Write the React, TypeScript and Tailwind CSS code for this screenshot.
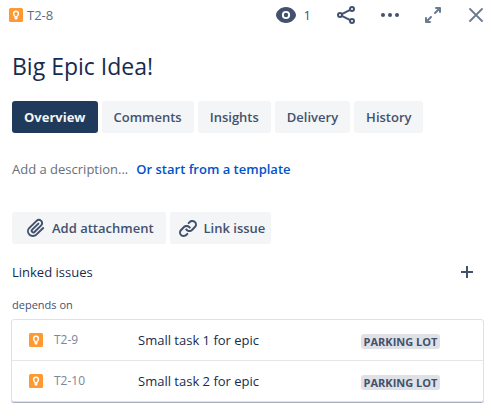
import { clsx } from "clsx";
import { useState } from "react";
import type { ReactNode } from "react";

type LinkedIssue = {
  key: string;
  summary: string;
  status: string;
};

const tabs = ["Overview", "Comments", "Insights", "Delivery", "History"];

const linkedIssues: LinkedIssue[] = [
  { key: "T2-9", summary: "Small task 1 for epic", status: "Parking lot" },
  { key: "T2-10", summary: "Small task 2 for epic", status: "Parking lot" },
];

function IdeaIcon() {
  return (
    <svg viewBox="0 0 14 14" className="size-3.5 shrink-0" aria-hidden="true">
      <rect width="14" height="14" rx="1.5" fill="#ff9a33" />
      <path
        d="M7 2.6a3.1 3.1 0 0 0-3.1 3.1c0 1.2.6 1.9 1.2 2.6.3.4.4.7.4 1.1h3c0-.4.1-.7.4-1.1.6-.7 1.2-1.4 1.2-2.6A3.1 3.1 0 0 0 7 2.6z"
        fill="#fff"
      />
      <path
        d="M7 3.9a1.7 1.7 0 0 0-1.7 1.8c0 .9.9 1.4 1 2.3h1.4c.1-.9 1-1.4 1-2.3A1.7 1.7 0 0 0 7 3.9z"
        fill="#ff9a33"
      />
      <path d="M5.6 9.2h2.8v1.5c0 .5-.4.8-.8.8H6.4c-.5 0-.8-.3-.8-.8z" fill="#fff" />
    </svg>
  );
}

function EyeIcon() {
  return (
    <svg viewBox="0 0 20 16" className="h-4 w-5" aria-hidden="true">
      <path
        fillRule="evenodd"
        fill="currentColor"
        d="M10 0C4.5 0 0 4.5 0 8s4.5 8 10 8 10-4.5 10-8-4.5-8-10-8zm0 3.9a4.1 4.1 0 1 1 0 8.2 4.1 4.1 0 0 1 0-8.2z"
      />
      <circle cx="10" cy="8" r="2.2" fill="currentColor" />
    </svg>
  );
}

function ShareIcon() {
  return (
    <svg
      viewBox="0 0 18 18"
      className="size-4.5"
      fill="none"
      stroke="currentColor"
      strokeWidth="2"
      aria-hidden="true"
    >
      <circle cx="3" cy="9" r="2" />
      <circle cx="15" cy="3" r="2" />
      <circle cx="15" cy="15" r="2" />
      <path d="M4.8 8.1l8.4-4.2M4.8 9.9l8.4 4.2" />
    </svg>
  );
}

function MoreIcon() {
  return (
    <svg viewBox="0 0 18 18" className="size-4.5" fill="currentColor" aria-hidden="true">
      <circle cx="2" cy="9" r="2" />
      <circle cx="9" cy="9" r="2" />
      <circle cx="16" cy="9" r="2" />
    </svg>
  );
}

function ExpandIcon() {
  return (
    <svg
      viewBox="0 0 16 16"
      className="size-4"
      fill="none"
      stroke="currentColor"
      strokeWidth="2"
      strokeLinecap="round"
      strokeLinejoin="round"
      aria-hidden="true"
    >
      <path d="M11 1h4v4M14.500 1.500L10 6M5 15H1v-4M1.500 14.500L6 10" />
    </svg>
  );
}

function CloseIcon() {
  return (
    <svg
      viewBox="0 0 14 14"
      className="size-3.5"
      fill="none"
      stroke="currentColor"
      strokeWidth="1.8"
      strokeLinecap="round"
      aria-hidden="true"
    >
      <path d="M1 1l12 12M13 1L1 13" />
    </svg>
  );
}

function AttachmentIcon() {
  return (
    <svg viewBox="0 0 24 24" className="size-6" fill="currentColor" aria-hidden="true">
      <path d="M11.643 17.965c-1.53 1.495-4.016 1.496-5.542.004a3.773 3.773 0 0 1 .002-5.412l7.147-6.985a2.316 2.316 0 0 1 3.233-.003c.893.873.895 2.282.004 3.153l-6.703 6.55a.653.653 0 0 1-.914-.008.62.62 0 0 1 0-.902l6.229-6.087a.941.941 0 0 0 0-1.353.995.995 0 0 0-1.384 0l-6.23 6.087a2.502 2.502 0 0 0 0 3.607 2.643 2.643 0 0 0 3.683.009l6.703-6.55a4.074 4.074 0 0 0-.003-5.859 4.306 4.306 0 0 0-6.002.003l-7.148 6.985a5.655 5.655 0 0 0-.001 8.118c2.29 2.237 6.014 2.238 8.308-.004l6.832-6.675a.936.936 0 0 0 0-1.352.99.99 0 0 0-1.384 0l-6.832 6.675z" />
    </svg>
  );
}

function LinkIcon() {
  return (
    <svg viewBox="0 0 24 24" className="size-6" fill="currentColor" aria-hidden="true">
      <path d="M12.856 5.457l-.937.92a1.002 1.002 0 0 0 0 1.437 1.047 1.047 0 0 0 1.463 0l.984-.966c.967-.95 2.542-1.135 3.602-.288a2.54 2.54 0 0 1 .203 3.81l-2.903 2.852a2.646 2.646 0 0 1-3.696 0l-1.11-1.09L9 13.57l1.108 1.089c1.822 1.788 4.802 1.788 6.622 0l2.905-2.852a4.558 4.558 0 0 0-.357-6.82c-1.893-1.517-4.695-1.226-6.422.47" />
      <path d="M11.144 19.543l.937-.92a1.002 1.002 0 0 0 0-1.437 1.047 1.047 0 0 0-1.462 0l-.985.966c-.967.95-2.542 1.135-3.602.288a2.54 2.54 0 0 1-.203-3.81l2.903-2.852a2.646 2.646 0 0 1 3.696 0l1.11 1.09L15 11.43l-1.108-1.089c-1.822-1.788-4.802-1.788-6.622 0l-2.905 2.852a4.558 4.558 0 0 0 .357 6.82c1.893 1.517 4.695 1.226 6.422-.47" />
    </svg>
  );
}

function PlusIcon() {
  return (
    <svg
      viewBox="0 0 12 12"
      className="size-3"
      fill="none"
      stroke="currentColor"
      strokeWidth="2"
      aria-hidden="true"
    >
      <path d="M6 0v12M0 6h12" />
    </svg>
  );
}

function ActionButton({
  icon,
  className,
  children,
}: {
  icon: ReactNode;
  className?: string;
  children: ReactNode;
}) {
  return (
    <button
      type="button"
      className={clsx(
        "flex h-8 items-center gap-1 rounded-[3px] bg-[#f4f5f7] font-semibold text-[#42526e] hover:bg-[#ebecf0]",
        className,
      )}
    >
      {icon}
      {children}
    </button>
  );
}

export default function App() {
  const [activeTab, setActiveTab] = useState("Overview");

  return (
    <main className="bg-white pb-3 font-['Open_Sans','Noto_Sans',sans-serif] text-[13px] leading-5 text-[#172b4d]">
      <header className="flex h-[30px] items-center justify-between pr-2 pl-[9px]">
        <a href="#T2-8" className="flex items-center gap-1 text-[#5e6c84]">
          <IdeaIcon />
          T2-8
        </a>
        <div className="flex items-center gap-7 text-[#42526e]">
          <div className="flex items-center gap-[26px]">
            <button type="button" aria-label="Watchers" className="flex items-center gap-2">
              <EyeIcon />
              1
            </button>
            <button type="button" aria-label="Share">
              <ShareIcon />
            </button>
            <button type="button" aria-label="More actions">
              <MoreIcon />
            </button>
            <button type="button" aria-label="Expand" className="text-[#6b7a90]">
              <ExpandIcon />
            </button>
          </div>
          <button type="button" aria-label="Close" className="text-[#6b7a90]">
            <CloseIcon />
          </button>
        </div>
      </header>

      <h1 className="mt-5 px-3 text-[23px] leading-8">Big Epic Idea!</h1>

      <div role="tablist" className="mt-[19px] flex gap-1 px-3">
        {tabs.map((tab) => (
          <button
            key={tab}
            type="button"
            role="tab"
            aria-selected={tab === activeTab}
            onClick={() => setActiveTab(tab)}
            className={clsx(
              "h-8 rounded-[3px] px-3",
              tab === activeTab
                ? "bg-[#1f3a5a] font-bold text-[#f4f5f7]"
                : "bg-[#f4f5f7] font-semibold text-[#42526e] hover:bg-[#ebecf0]",
            )}
          >
            {tab}
          </button>
        ))}
      </div>

      <p className="mt-[26px] flex gap-2 px-3">
        <span className="text-[#6b6e76]">Add a description...</span>
        <a href="#templates" className="font-semibold text-[#0052cc] hover:underline">
          Or start from a template
        </a>
      </p>

      <div className="mt-[33px] flex gap-1 px-3">
        <ActionButton icon={<AttachmentIcon />} className="px-3">
          Add attachment
        </ActionButton>
        <ActionButton icon={<LinkIcon />} className="px-1.5">
          Link issue
        </ActionButton>
      </div>

      <section>
        <div className="mt-[18px] flex items-center justify-between pr-[18px] pl-3">
          <h2>Linked issues</h2>
          <button type="button" aria-label="Link an issue" className="text-[#42526e]">
            <PlusIcon />
          </button>
        </div>
        <h3 className="mt-[13px] px-3 text-[11px] text-[#42526e]">depends on</h3>
        <ul className="mt-1 mr-[7px] ml-[11px] rounded-[3px] border border-[#dfe1e6] shadow-[0_1px_0_#a5b1c2]">
          {linkedIssues.map((issue) => (
            <li
              key={issue.key}
              className="grid grid-cols-[109px_1fr_79px] items-center border-b border-[#e4e6ea] py-2.5 pr-[43px] pl-[17px] last:border-b-0"
            >
              <a href={`#${issue.key}`} className="flex items-center gap-[11px] text-xs text-[#7a869a]">
                <IdeaIcon />
                {issue.key}
              </a>
              <span className="truncate">{issue.summary}</span>
              <span className="mt-0.5 rounded-[3px] bg-[#dfe1e6] text-center text-[11px] leading-[15px] font-bold text-[#42526e] uppercase">
                {issue.status}
              </span>
            </li>
          ))}
        </ul>
      </section>
    </main>
  );
}
